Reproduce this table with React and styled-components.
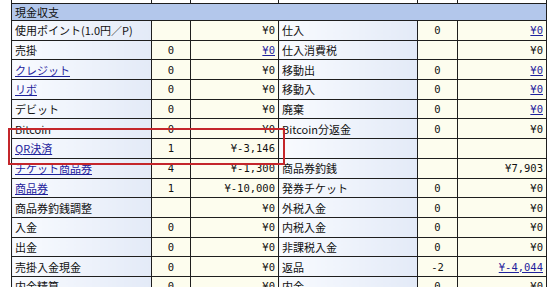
import React from 'react';
import styled, { createGlobalStyle } from 'styled-components';

const GlobalStyle = createGlobalStyle`
  html, body {
    margin: 0;
    padding: 0;
    background: #fff;
  }
  body {
    font-family: "Noto Sans CJK JP", "Liberation Sans", sans-serif;
    font-size: 11px;
    color: #111;
    overflow: hidden;
  }
`;

const Page = styled.div`
  position: relative;
  display: flow-root;
  padding-left: 11px;
  width: 535px;
`;

const Table = styled.table`
  border-collapse: collapse;
  table-layout: fixed;
  width: 535px;
  margin-top: -17px;
`;

const Row = styled.tr`
  height: ${p => p.$h || 19.7}px;
`;

const Cell = styled.td`
  border: 1px solid #1e1e1e;
  padding: 0 3px;
  white-space: nowrap;
  overflow: hidden;
  line-height: 14px;
`;

const Head = styled(Cell)`
  background: #b3c7eb;
  padding-left: 3px;
`;

const Label = styled(Cell)`
  background: linear-gradient(to right, #f9fbff, #e3eaf7);
`;

const Count = styled(Cell)`
  background: #fdfdee;
  text-align: center;
  font-family: "DejaVu Sans Mono", "Noto Sans CJK JP", monospace;
  font-size: 10.5px;
`;

const Amount = styled(Count)`
  text-align: right;
  padding-right: 3px;
`;

const Blank = styled(Cell)`
  background: #fff;
`;

const Link = styled.a`
  color: #1f239c;
  text-decoration: underline;
`;

const Mark = styled.div`
  position: absolute;
  left: 8px;
  top: 128px;
  width: 277px;
  height: 37px;
  box-sizing: border-box;
  border: 2px solid #c4262b;
  pointer-events: none;
`;

const rows = [
  [{ t: '使用ポイント(1.0円／P)' }, '', { t: '¥0' }, { t: '仕入' }, '0', { t: '¥0', link: true }],
  [{ t: '売掛' }, '0', { t: '¥0', link: true }, { t: '仕入消費税' }, '', { t: '¥0' }],
  [{ t: 'クレジット', link: true }, '0', { t: '¥0' }, { t: '移動出' }, '0', { t: '¥0', link: true }],
  [{ t: 'リボ', link: true }, '0', { t: '¥0' }, { t: '移動入' }, '0', { t: '¥0', link: true }],
  [{ t: 'デビット' }, '0', { t: '¥0' }, { t: '廃棄' }, '0', { t: '¥0', link: true }],
  [{ t: 'Bitcoin' }, '0', { t: '¥0' }, { t: 'Bitcoin分返金' }, '0', { t: '¥0' }],
  [{ t: 'QR決済', link: true }, '1', { t: '¥-3,146' }, { t: '' }, '', { t: '' }],
  [{ t: 'チケット商品券', link: true }, '4', { t: '¥-1,300' }, { t: '商品券釣銭' }, '', { t: '¥7,903' }],
  [{ t: '商品券', link: true }, '1', { t: '¥-10,000' }, { t: '発券チケット' }, '0', { t: '¥0' }],
  [{ t: '商品券釣銭調整' }, '', { t: '¥0' }, { t: '外税入金' }, '0', { t: '¥0' }],
  [{ t: '入金' }, '0', { t: '¥0' }, { t: '内税入金' }, '0', { t: '¥0' }],
  [{ t: '出金' }, '0', { t: '¥0' }, { t: '非課税入金' }, '0', { t: '¥0' }],
  [{ t: '売掛入金現金' }, '0', { t: '¥0' }, { t: '返品' }, '-2', { t: '¥-4,044', link: true }],
  [{ t: '内金精算' }, '0', { t: '¥0' }, { t: '内金' }, '0', { t: '¥0' }],
];

function Text({ item }) {
  if (!item.t) return null;
  return item.link ? <Link href="#">{item.t}</Link> : item.t;
}

function App() {
  return (
    <>
      <GlobalStyle />
      <Page>
        <Table>
          <colgroup>
            <col style={{ width: 140 }} />
            <col style={{ width: 39 }} />
            <col style={{ width: 88 }} />
            <col style={{ width: 139 }} />
            <col style={{ width: 40 }} />
            <col style={{ width: 89 }} />
          </colgroup>
          <tbody>
            <Row $h={20}>
              <Blank /><Blank /><Blank /><Blank /><Blank /><Blank />
            </Row>
            <Row $h={17}>
              <Head colSpan={6}>現金収支</Head>
            </Row>
            {rows.map((r, i) => (
              <Row key={i}>
                <Label><Text item={r[0]} /></Label>
                <Count>{r[1]}</Count>
                <Amount><Text item={r[2]} /></Amount>
                <Label><Text item={r[3]} /></Label>
                <Count>{r[4]}</Count>
                <Amount><Text item={r[5]} /></Amount>
              </Row>
            ))}
          </tbody>
        </Table>
        <Mark />
      </Page>
    </>
  );
}

export default App;
